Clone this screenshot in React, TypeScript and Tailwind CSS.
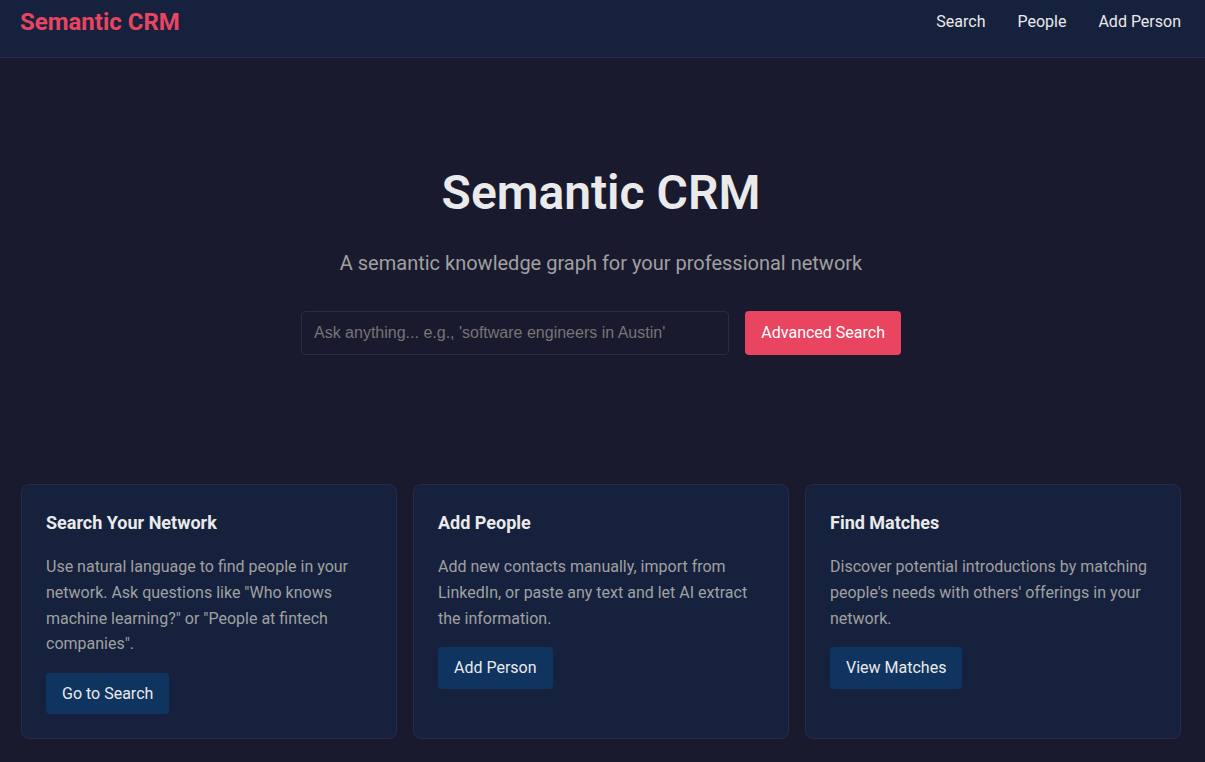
import React from 'react';

const FONT = { fontFamily: 'Roboto, "Noto Sans", sans-serif' } as const;

interface FeatureCardProps {
  title: string;
  body: string;
  action: string;
}

const FeatureCard: React.FC<FeatureCardProps> = ({ title, body, action }) => {
  return (
    <div className="bg-[#16213e] border border-[#2a2a4a] rounded-lg p-6 flex flex-col items-start">
      <h3 className="text-lg font-bold text-[#eaeaea] leading-[1.6] mb-[17px]">{title}</h3>
      <p className="text-base text-[#a0a0a0] leading-[1.6] mb-4">{body}</p>
      <button className="bg-[#0f3460] text-[#eaeaea] text-base leading-[1.6] px-4 py-2 rounded">
        {action}
      </button>
    </div>
  );
};

export default function App() {
  return (
    <div className="min-h-screen bg-[#1a1a2e] text-[#eaeaea]" style={FONT}>
      {/* top bar */}
      <header className="h-[58px] bg-[#16213e] border-b border-[#2a2a4a] flex items-start justify-between pt-[8px] pl-5 pr-6">
        <a className="text-2xl font-bold text-[#e94560] leading-[28px]">Semantic CRM</a>
        <nav className="flex gap-8 text-base leading-[28px] text-[#eaeaea]">
          <a>Search</a>
          <a>People</a>
          <a>Add Person</a>
        </nav>
      </header>

      <main className="pl-[21px] pr-[24px]">
        <section className="pt-[106px] flex flex-col items-center text-center">
          <h1 className="text-5xl font-semibold leading-[1.2] text-[#eaeaea]">Semantic CRM</h1>
          <p className="mt-[25px] text-xl leading-[1.6] text-[#a0a0a0]">
            A semantic knowledge graph for your professional network
          </p>
          <div className="mt-8 w-full max-w-[600px] flex gap-4">
            <input
              type="text"
              placeholder="Ask anything... e.g., 'software engineers in Austin'"
              className="flex-1 h-[44px] px-3 bg-[#1a1a2e] border border-[#2a2a4a] rounded text-base text-[#eaeaea] placeholder:text-[#757575] outline-none"
              style={{ fontFamily: '"Liberation Sans", Arial, sans-serif' }}
            />
            <button className="h-[44px] px-4 bg-[#e94560] text-white text-base rounded">
              Advanced Search
            </button>
          </div>
        </section>

        <section className="mt-[129px] grid grid-cols-3 gap-4 pb-6">
          <FeatureCard
            title="Search Your Network"
            body={'Use natural language to find people in your network. Ask questions like "Who knows machine learning?" or "People at fintech companies".'}
            action="Go to Search"
          />
          <FeatureCard
            title="Add People"
            body="Add new contacts manually, import from LinkedIn, or paste any text and let AI extract the information."
            action="Add Person"
          />
          <FeatureCard
            title="Find Matches"
            body="Discover potential introductions by matching people's needs with others' offerings in your network."
            action="View Matches"
          />
        </section>
      </main>
    </div>
  );
}
